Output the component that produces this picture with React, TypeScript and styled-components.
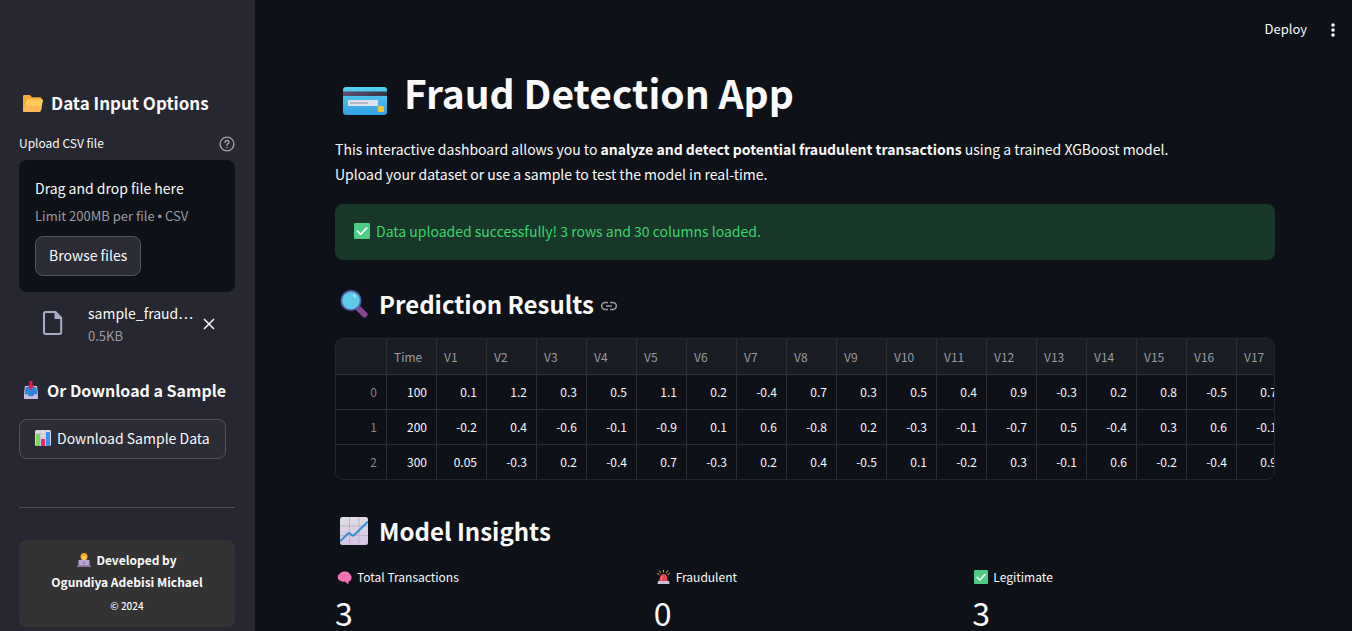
import React from "react";
import styled, { createGlobalStyle } from "styled-components";

const GlobalStyle = createGlobalStyle`
  *, *::before, *::after { box-sizing: border-box; }
  html, body { margin: 0; background: #0e1117; }
  body, button, input {
    font-family: "Noto Sans CJK SC", "Noto Sans", sans-serif;
    color: #fafafa;
  }
  body { font-size: 14px; line-height: 24px; }
  h1, h2, h3, p, dl, dd { margin: 0; }
`;

const Shell = styled.div`
  display: grid;
  grid-template-columns: 255px minmax(0, 1fr);
  height: 100vh;
  overflow: hidden;
`;

const Sidebar = styled.aside`
  background: #262730;
  padding: 91px 20px 0 19px;
  overflow: hidden;
`;

const Main = styled.main`
  padding: 0 77px 0 80px;
  overflow: hidden;
`;

const Emoji = styled.svg<{ $size: number }>`
  width: ${(p) => p.$size}px;
  height: ${(p) => p.$size}px;
  flex: none;
  display: block;
`;

const SideTitle = styled.h3<{ $size: number }>`
  display: flex;
  align-items: center;
  gap: 7px;
  padding-left: 3px;
  font-size: ${(p) => p.$size}px;
  line-height: 24px;
  font-weight: 600;
  white-space: nowrap;
`;

const LabelRow = styled.div`
  display: flex;
  justify-content: space-between;
  align-items: center;
  margin-top: 17px;
  height: 24px;
`;

const FieldLabel = styled.label`
  padding-bottom: 2px;
  font-size: 12px;
  line-height: 20px;
`;

const IconButton = styled.button`
  display: flex;
  padding: 0;
  border: 0;
  background: none;
  cursor: pointer;
`;

const DropZone = styled.div`
  margin-top: 4px;
  padding: 16px;
  border-radius: 8px;
  background: #0e1117;
`;

const Hint = styled.p`
  margin: 5px 0 10px;
  font-size: 13px;
  line-height: 21px;
  color: #9b9ca1;
  white-space: nowrap;
`;

const Bullet = styled.span`
  font-family: "Liberation Sans", sans-serif;
  line-height: 1;
`;

const HiddenFile = styled.input`
  display: none;
`;

const Button = styled.button<{ $pad: number }>`
  display: inline-flex;
  align-items: center;
  gap: 6px;
  height: 40px;
  padding: 0 ${(p) => p.$pad}px 2px;
  border: 1px solid #51525a;
  border-radius: 8px;
  background: #2b2c36;
  font-size: 14px;
  line-height: 24px;
  white-space: nowrap;
  cursor: pointer;
`;

const FileRow = styled.div`
  display: flex;
  align-items: center;
  margin-top: 9px;
  padding: 0 20px 0 23px;
`;

const FileText = styled.div`
  flex: 1;
  min-width: 0;
  margin: 0 6px 0 24px;
`;

const FileName = styled.div`
  line-height: 24px;
  white-space: nowrap;
`;

const FileSize = styled.div`
  font-size: 13px;
  line-height: 21px;
  color: #9b9ca1;
`;

const Section = styled.section`
  margin-top: 32px;
`;

const ButtonSlot = styled.div`
  display: flex;
  margin-top: 17px;
`;

const Divider = styled.hr`
  margin: 48px 0 32px;
  border: 0;
  border-top: 1px solid #4c4d55;
`;

const Credit = styled.footer`
  padding: 9px 8px 10px;
  border-radius: 8px;
  background: #333;
  text-align: center;
  font-size: 12px;
  line-height: 22px;
  font-weight: 600;
`;

const CreditLine = styled.div`
  display: flex;
  justify-content: center;
  align-items: center;
  gap: 5px;
`;

const Copyright = styled.div`
  padding-top: 2px;
  font-size: 10px;
  font-weight: 500;
`;

const Toolbar = styled.header`
  display: flex;
  justify-content: flex-end;
  align-items: center;
  gap: 24px;
  height: 60px;
  margin-right: -60px;
`;

const DeployButton = styled.button`
  padding: 0 0 2px;
  border: 0;
  background: none;
  font-size: 13px;
  line-height: 20px;
  cursor: pointer;
`;

const Title = styled.h1`
  display: flex;
  align-items: flex-end;
  gap: 16px;
  margin-top: 6px;
  padding-left: 8px;
  font-size: 39px;
  line-height: 53px;
  font-weight: 700;
`;

const Intro = styled.p`
  margin-top: 18px;
  line-height: 25px;
`;

const Alert = styled.div`
  display: flex;
  align-items: center;
  gap: 6px;
  min-height: 56px;
  margin-top: 17px;
  padding: 0 19px 2px;
  border-radius: 8px;
  background: #173828;
  color: #3dd56d;
`;

const Heading = styled.h2<{ $top: number }>`
  display: flex;
  align-items: center;
  gap: 11px;
  margin-top: ${(p) => p.$top}px;
  padding-left: 5px;
  font-size: 24px;
  line-height: 34px;
  font-weight: 600;
`;

const Anchor = styled.a`
  display: flex;
  margin: 4px 0 0 -4px;
  color: #9b9ca1;
`;

const Grid = styled.div`
  margin-top: 17px;
  border: 1px solid #24262c;
  border-radius: 8px;
  overflow-x: auto;
  scrollbar-width: none;
`;

const Table = styled.table`
  width: 951px;
  table-layout: fixed;
  border-collapse: separate;
  border-spacing: 0;
  font-size: 12px;
  line-height: 20px;
`;

const IndexCol = styled.col`
  width: 51px;
`;

const HeadCell = styled.th`
  height: 36px;
  padding: 0 0 0 7px;
  border-right: 1px solid #2d2f35;
  border-bottom: 1px solid #2d2f35;
  background: #1a1c23;
  color: #9b9ca1;
  font-weight: 400;
  text-align: left;
`;

const Cell = styled.td`
  height: 35px;
  padding: 0 9px 0 0;
  border-right: 1px solid #2d2f35;
  border-bottom: 1px solid #2d2f35;
  text-align: right;
  tr:last-child > & { height: 34px; border-bottom: 0; }
`;

const IndexCell = styled(Cell).attrs({ as: "th", scope: "row" })`
  color: #83858a;
  font-weight: 400;
`;

const Metrics = styled.dl`
  display: grid;
  grid-template-columns: repeat(3, minmax(0, 1fr));
  gap: 16px;
  margin-top: 19px;
`;

const MetricLabel = styled.dt`
  display: flex;
  align-items: center;
  gap: 5px;
  padding-left: 2px;
  font-size: 12px;
  line-height: 20px;
`;

const MetricValue = styled.dd`
  font-size: 32px;
  line-height: 50px;
`;

const Folder = () => (
  <Emoji $size={22} viewBox="0 0 22 22" aria-hidden="true">
    <path d="M1 4.200Q1 3 2.200 3h5.600l2.300 2.200h8Q19.500 5.200 19.500 6.600V18H1Z" fill="#f5a83b" />
    <path d="M4.600 8.400Q5 7.300 6.200 7.300H20q1.300 0 1 1.300l-2.300 9.800Q18.400 20 17 20H2.500Q1 20 1 18.500Z" fill="#ffcb55" />
    <path d="M2 14 1.200 19Q1.600 20 2.500 20H17q1.300 0 1.700-1.600l1-4.400Z" fill="#ffb557" />
  </Emoji>
);

const Inbox = () => (
  <Emoji $size={18} viewBox="0 0 18 18" aria-hidden="true">
    <g transform="translate(1.5 0) scale(.83 1)">
      <path d="M2.500 5h13q1 0 1 1l.8 7v4q0 1-1 1H1.700q-1 0-1-1v-4l.8-7q0-1 1-1Z" fill="#d9cfe6" />
      <path d="M2.500 6h13l1 7.500h-3.500l-1.200 2H6.200L5 13.500H1.500Z" fill="#2c83d8" />
      <path d="M1 13.500h4l1.200 2h5.600l1.200-2h4V17q0 1-1 1H2q-1 0-1-1Z" fill="#cbbbdc" />
      <path d="M7.200 0h3.600v4.500H13L9 9 5 4.500h2.200Z" fill="#e3224f" />
    </g>
  </Emoji>
);

const Bars = () => (
  <Emoji $size={16} viewBox="0 0 16 16" aria-hidden="true">
    <rect width="16" height="16" rx="1.500" fill="#dfd9e6" />
    <path d="M0 4h16M0 8h16M0 12h16M5 0v16M11 0v16" stroke="#b9afc6" strokeWidth=".6" />
    <path d="M1 4h4v12H1Z" fill="#77d95c" />
    <path d="M6 9h4v7H6Z" fill="#e62c68" />
    <path d="M11 2h4v14h-4Z" fill="#3296ed" />
  </Emoji>
);

const Technologist = () => (
  <Emoji $size={14} viewBox="0 0 14 14" aria-hidden="true">
    <path d="M2.500 10V8Q3 6.500 5 6h4q2 .5 2.500 2v2Z" fill="#7155a0" />
    <circle cx="7" cy="3.500" r="3.500" fill="#f5a51c" />
    <path d="M5 2.500Q7 4 9.300 2.600V5Q9 7.300 7 7.300T5 5Z" fill="#ffcf4a" />
    <path d="M1.500 7h11v5.500h-11Z" fill="#b9a2d4" />
    <path d="M0 12.300h14v1.500H0Z" fill="#9b83b9" />
    <circle cx="7" cy="9.800" r=".9" fill="#72578e" />
  </Emoji>
);

const CreditCard = () => (
  <Emoji $size={45} viewBox="0 0 45 45" aria-hidden="true">
    <defs>
      <linearGradient id="card" x1="0" y1="0" x2="0" y2="1">
        <stop offset="0" stopColor="#55d1ef" />
        <stop offset="1" stopColor="#369fe5" />
      </linearGradient>
      <linearGradient id="stripe">
        <stop offset="0" stopColor="#5d4b78" />
        <stop offset="1" stopColor="#37383f" />
      </linearGradient>
    </defs>
    <rect y="13" width="44" height="28" rx="3" fill="url(#card)" />
    <rect y="17.500" width="44" height="4.500" fill="url(#stripe)" />
    <rect x="5" y="26" width="30" height="6" rx="1" fill="#dfe1ec" />
    <path d="M7 29h18" stroke="#9a9daa" strokeWidth="1.200" />
    <rect x="35" y="32" width="6" height="6" rx="1" fill="#f4c52f" />
  </Emoji>
);

const Check = ({ size }: { size: number }) => (
  <Emoji $size={size} viewBox="0 0 16 16" aria-hidden="true">
    <rect width="16" height="16" rx="1.200" fill="#4bcd86" />
    <path d="m3.500 8.200 3.200 3.200 6-6.400" fill="none" stroke="#fff" strokeWidth="1.700" strokeLinecap="round" strokeLinejoin="round" />
  </Emoji>
);

const Magnifier = () => (
  <Emoji $size={28} viewBox="0 0 28 28" aria-hidden="true">
    <path d="m18 18 6.500 6.500" stroke="#85458f" strokeWidth="6" strokeLinecap="round" />
    <path d="m15.500 16 3 3" stroke="#5f5a91" strokeWidth="4" />
    <circle cx="11" cy="10.500" r="9.700" fill="#5ccbea" stroke="#5060a0" strokeWidth="1.700" />
    <ellipse cx="14.500" cy="5.800" rx="2" ry="1.300" transform="rotate(35 14.500 5.800)" fill="#a6e8f7" />
  </Emoji>
);

const Chart = () => (
  <Emoji $size={28} viewBox="0 0 28 28" aria-hidden="true">
    <defs>
      <linearGradient id="paper" x1="0" y1="0" x2="0" y2="1">
        <stop offset="0" stopColor="#dfdce3" />
        <stop offset="1" stopColor="#d5c5e6" />
      </linearGradient>
    </defs>
    <rect width="28" height="28" rx="2.500" fill="url(#paper)" />
    <path d="M0 9h28M0 18.500h28M9.500 0v28M19 0v28" stroke="#bdb5c5" strokeWidth="1" />
    <path d="m0 24.500 8-8q1-1 2 0l2 1.800q1 1 2 0L28 4.500" fill="none" stroke="#358fd4" strokeWidth="2" />
  </Emoji>
);

const Brain = () => (
  <Emoji $size={15} viewBox="0 0 15 15" aria-hidden="true">
    <path d="M1 8.500Q0 5 3 3.500 5 1 8 1.500q3-.5 4.500 2 2.500 2 2 5-.3 2.500-3 2.800l.3 2-1.500.5-2.300-2.300Q4 12 3 10.500 1.500 10.500 1 8.500Z" fill="#f576b7" />
    <path d="M3 6q2 0 2-2m1 4q2.500 0 2.500-3M10 4q0 2 2.500 2M9 9q2.500 1 4-1M3 9h2.500" fill="none" stroke="#dd5aa3" strokeWidth=".6" strokeLinecap="round" />
  </Emoji>
);

const Siren = () => (
  <Emoji $size={15} viewBox="0 0 15 15" aria-hidden="true">
    <path d="M7.500 0v2M3.500.8l1 1.800M11.500.8l-1 1.800M1.500 3.500l1.700 1M13.500 3.500l-1.700 1" stroke="#e8a83f" strokeWidth="1" strokeLinecap="round" />
    <path d="M3 11.500 4.300 6Q5 4 7.500 4t3.200 2L12 11.500Z" fill="#ee3e50" />
    <path d="M6 6.500 5 10" stroke="#ff8c91" strokeWidth="1.200" strokeLinecap="round" />
    <path d="M2 11h11l.5 3h-12Z" fill="#cdbedc" />
  </Emoji>
);

const HelpIcon = () => (
  <svg width="16" height="16" viewBox="0 0 16 16" fill="none" stroke="#a3a4a8" strokeWidth="1.400" strokeLinecap="round" strokeLinejoin="round">
    <circle cx="8" cy="8" r="6.900" />
    <path d="M6 6.300q.2-1.800 2-1.800t2 1.700q0 1-1.200 1.700Q8 8.400 8 9.200M8 11.500v.1" />
  </svg>
);

const FileIcon = () => (
  <svg width="22" height="26" viewBox="0 0 22 26" fill="none" stroke="#a9adc6" strokeWidth="2" strokeLinejoin="round" aria-hidden="true">
    <path d="M3.700 1H13.500l5.700 5.700v14.600Q19.200 23 17.500 23H3.700Q2 23 2 21.300V2.700Q2 1 3.700 1Z" />
    <path d="M13 1.500v6h6Z" fill="#a9adc6" strokeWidth="1" />
  </svg>
);

const CloseIcon = () => (
  <svg width="12" height="12" viewBox="0 0 12 12" stroke="#fafafa" strokeWidth="1.500">
    <path d="m1 1 10 10M11 1 1 11" />
  </svg>
);

const LinkIcon = () => (
  <svg width="16" height="10" viewBox="0 0 16 10" fill="none" stroke="currentColor" strokeWidth="1.500">
    <path d="M7 1.500H4.200a3.500 3.500 0 0 0 0 7H7M9 1.500h2.800a3.500 3.500 0 0 1 0 7H9M5 5h6" />
  </svg>
);

const DotsIcon = () => (
  <svg width="4" height="14" viewBox="0 0 4 14" fill="#fafafa">
    <circle cx="2" cy="2" r="1.800" />
    <circle cx="2" cy="7" r="1.800" />
    <circle cx="2" cy="12" r="1.800" />
  </svg>
);

const columns = ["Time", ...Array.from({ length: 17 }, (_, i) => `V${i + 1}`)];

const rows = [
  ["100", "0.1", "1.2", "0.3", "0.5", "1.1", "0.2", "-0.4", "0.7", "0.3", "0.5", "0.4", "0.9", "-0.3", "0.2", "0.8", "-0.5", "0.7"],
  ["200", "-0.2", "0.4", "-0.6", "-0.1", "-0.9", "0.1", "0.6", "-0.8", "0.2", "-0.3", "-0.1", "-0.7", "0.5", "-0.4", "0.3", "0.6", "-0.1"],
  ["300", "0.05", "-0.3", "0.2", "-0.4", "0.7", "-0.3", "0.2", "0.4", "-0.5", "0.1", "-0.2", "0.3", "-0.1", "0.6", "-0.2", "-0.4", "0.9"],
];

const metrics = [
  { label: "Total Transactions", value: 3, icon: <Brain /> },
  { label: "Fraudulent", value: 0, icon: <Siren /> },
  { label: "Legitimate", value: 3, icon: <Check size={14} /> },
];

export default function App() {
  const fileInput = React.useRef<HTMLInputElement>(null);
  return (
    <>
      <GlobalStyle />
      <Shell>
        <Sidebar>
          <SideTitle $size={17}><Folder />Data Input Options</SideTitle>
          <LabelRow>
            <FieldLabel htmlFor="csv">Upload CSV file</FieldLabel>
            <IconButton type="button" aria-label="Help"><HelpIcon /></IconButton>
          </LabelRow>
          <DropZone>
            <div>Drag and drop file here</div>
            <Hint>Limit 200MB per file <Bullet>•</Bullet> CSV</Hint>
            <HiddenFile ref={fileInput} id="csv" type="file" accept=".csv" />
            <Button $pad={13} type="button" onClick={() => fileInput.current?.click()}>Browse files</Button>
          </DropZone>
          <FileRow>
            <FileIcon />
            <FileText>
              <FileName>sample_fraud…</FileName>
              <FileSize>0.5KB</FileSize>
            </FileText>
            <IconButton type="button" aria-label="Remove file"><CloseIcon /></IconButton>
          </FileRow>
          <Section>
            <SideTitle $size={16}><Inbox />Or Download a Sample</SideTitle>
            <ButtonSlot>
              <Button $pad={15} type="button"><Bars />Download Sample Data</Button>
            </ButtonSlot>
          </Section>
          <Divider />
          <Credit>
            <CreditLine><Technologist />Developed by</CreditLine>
            <div>Ogundiya Adebisi Michael</div>
            <Copyright>© 2024</Copyright>
          </Credit>
        </Sidebar>
        <Main>
          <Toolbar>
            <DeployButton type="button">Deploy</DeployButton>
            <IconButton type="button" aria-label="Main menu"><DotsIcon /></IconButton>
          </Toolbar>
          <Title><CreditCard />Fraud Detection App</Title>
          <Intro>
            This interactive dashboard allows you to <strong>analyze and detect potential fraudulent transactions</strong> using a trained XGBoost model.
            <br />
            Upload your dataset or use a sample to test the model in real-time.
          </Intro>
          <Alert role="status"><Check size={16} />Data uploaded successfully! 3 rows and 30 columns loaded.</Alert>
          <Heading $top={27} id="prediction-results">
            <Magnifier />Prediction Results
            <Anchor href="#prediction-results" aria-label="Link to heading"><LinkIcon /></Anchor>
          </Heading>
          <Grid>
            <Table>
              <colgroup>
                <IndexCol />
                {columns.map((c) => <col key={c} />)}
              </colgroup>
              <thead>
                <tr>
                  <HeadCell />
                  {columns.map((c) => <HeadCell key={c} scope="col">{c}</HeadCell>)}
                </tr>
              </thead>
              <tbody>
                {rows.map((row, r) => (
                  <tr key={r}>
                    <IndexCell>{r}</IndexCell>
                    {row.map((v, c) => <Cell key={c}>{v}</Cell>)}
                  </tr>
                ))}
              </tbody>
            </Table>
          </Grid>
          <Heading $top={34}><Chart />Model Insights</Heading>
          <Metrics>
            {metrics.map((m) => (
              <div key={m.label}>
                <MetricLabel>{m.icon}{m.label}</MetricLabel>
                <MetricValue>{m.value}</MetricValue>
              </div>
            ))}
          </Metrics>
        </Main>
      </Shell>
    </>
  );
}
